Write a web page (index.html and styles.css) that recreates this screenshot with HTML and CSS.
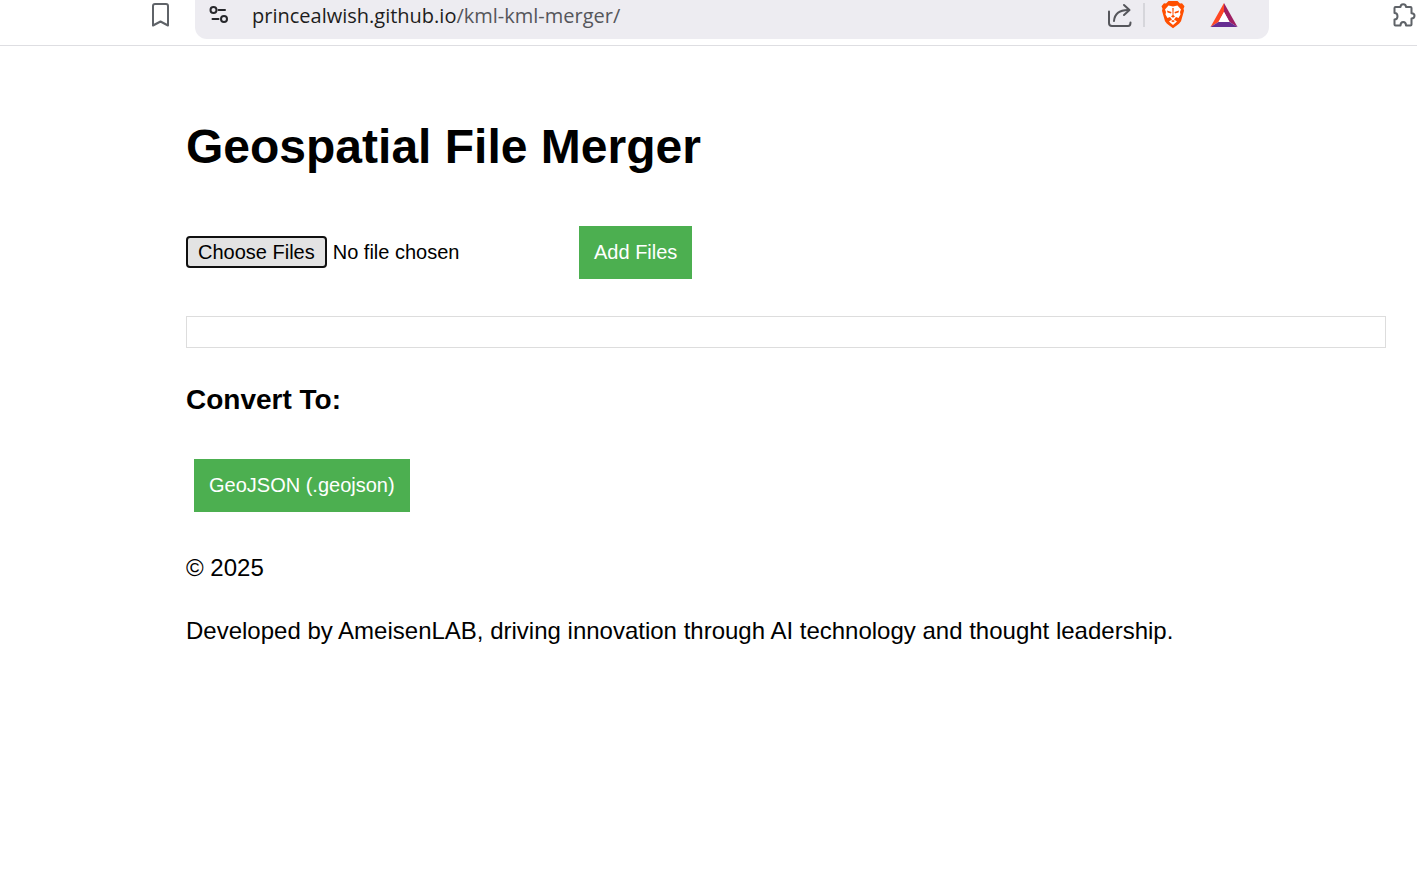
FILE: index.html
```html
<!DOCTYPE html>
<html lang="en">
<head>
<meta charset="utf-8">
<title>Geospatial File Merger</title>
<link rel="stylesheet" href="styles.css">
</head>
<body>
<header class="toolbar">
  <button class="icon-button" type="button" aria-label="Bookmark this page">
    <svg width="17" height="24" viewBox="0 0 17 24" fill="none" stroke="#5f6368" stroke-width="2" stroke-linejoin="round"><path d="M3 1h11Q16 1 16 3V22.500L8.500 18.500 1 22.500V3Q1 1 3 1Z"/></svg>
  </button>
  <div class="address">
    <button class="icon-button" type="button" aria-label="Site information">
      <svg width="20" height="18" viewBox="0 0 20 18" fill="none" stroke="#27282c" stroke-width="2" stroke-linecap="round"><circle cx="4.500" cy="4" r="3"/><path d="M9.500 4H16M3.500 13H9.500"/><circle cx="15" cy="13" r="3"/></svg>
    </button>
    <div class="url"><span class="host">princealwish.github.io</span>/kml-kml-merger/</div>
    <button class="icon-button" type="button" aria-label="Share">
      <svg width="24" height="24" viewBox="0 0 24 24" fill="none" stroke="#55565b" stroke-width="2" stroke-linecap="round" stroke-linejoin="round"><path d="M1 8.500V20Q1 23 4 23H20Q22.500 23 22.500 19.500"/><path d="M6 18Q7 7 20 7"/><path d="M16 2L21.500 7L16 12"/></svg>
    </button>
    <span class="divider"></span>
    <button class="icon-button" type="button" aria-label="Brave Shields">
      <svg width="24" height="28" viewBox="0 0 24 28"><path fill="#ff4f00" d="M7.500 0h9L19 2.500l2-.3 2.500 3-1 2.500.5 2-3 10.500-2 2.500-6 4.500-6-4.500L4 20.200 1 9.700l.5-2L.5 5.200 3 2.200l2 .3Z"/><path fill="#fff" d="M7.500 4.500l4.500 1 4.500-1L20 8.500 19 11l.5 2.500-2 3.500-2.500-1-2 2.500 3 2-4 3.500-4-3.500 3-2L9 16l-2.500 1-2-3.500L5 11 4 8.500Z"/><path fill="#ff4f00" d="M6 9.500l4.500 1.500-.5 1.500-3.500-1ZM18 9.500L13.500 11l.5 1.500 3.500-1ZM11.300 7h1.400l-.3 7 1.600 1.500-2 1.300-2-1.300 1.600-1.500ZM10 20l2-1 2 1-2 1.200Z"/></svg>
    </button>
    <button class="icon-button rewards" type="button" aria-label="Brave Rewards">
      <svg width="28" height="24" viewBox="0 0 28 24"><path fill="#ff4724" d="M14 0v9L8.500 19 .5 24Z"/><path fill="#9e1f63" d="M14 0l13.500 24-8-5L14 9Z"/><path fill="#662d91" d="M.5 24l8-5h11l8 5Z"/><path fill="#fff" d="M14 9l5.500 10h-11Z"/></svg>
    </button>
  </div>
  <button class="icon-button" type="button" aria-label="Extensions">
    <svg width="24" height="24" viewBox="0 0 24 24" fill="none" stroke="#5f6368" stroke-width="2" stroke-linejoin="round"><path d="M2.500 4H7.500C7.500 .2 13 .2 13 4H17.500Q18.500 4 18.500 5V10.200C22.500 10.200 22.500 15.500 18.500 15.500V21.500Q18.500 22.500 17.500 22.500H13C13 17.800 7.500 17.800 7.500 22.500H2.500Q1.500 22.500 1.500 21.500V16.500C5.500 16.500 5.500 10 1.500 10V5Q1.500 4 2.500 4Z"/></svg>
  </button>
</header>
<main class="page">
  <h1 class="title">Geospatial File Merger</h1>
  <div class="upload">
    <input class="file-input" type="file" multiple aria-label="Choose files to merge">
    <button class="button" type="button">Add Files</button>
  </div>
  <div class="file-list"></div>
  <h2 class="subtitle">Convert To:</h2>
  <div class="formats">
    <button class="button" type="button">GeoJSON (.geojson)</button>
  </div>
  <footer class="footer">
    <p>© 2025</p>
    <p>Developed by AmeisenLAB, driving innovation through AI technology and thought leadership.</p>
  </footer>
</main>
</body>
</html>
```
FILE: styles.css
```css
* { box-sizing: border-box; }
body {
  margin: 0;
  background: #fff;
  color: #000;
  font: 24px/28px "Liberation Sans", Arial, sans-serif;
}
.toolbar {
  display: flex;
  align-items: flex-start;
  height: 46px;
  padding-left: 152px;
  border-bottom: 1px solid #dedee2;
  overflow: hidden;
}
.icon-button {
  display: flex;
  flex: none;
  align-items: center;
  height: 30px;
  padding: 0;
  border: 0;
  background: none;
}
.icon-button svg { display: block; }
.address {
  display: flex;
  flex: 1;
  height: 39px;
  margin: 0 124px 0 26px;
  padding: 0 31px 0 14px;
  border-radius: 0 0 12px 12px;
  background: #edecf1;
}
.url {
  flex: 1;
  margin-left: 23px;
  color: #55565b;
  font: 20px/32px "Open Sans", "Noto Sans", sans-serif;
  white-space: nowrap;
}
.host { color: #1d1d20; }
.divider {
  width: 2px;
  height: 24px;
  margin: 3px 16px 0 11px;
  background: #d6d6db;
}
.rewards { margin-left: 25px; }
.page { padding: 73px 31px 32px 186px; }
.title {
  margin: 0;
  font-size: 48px;
  line-height: 56px;
}
.upload {
  display: flex;
  align-items: flex-start;
  margin-top: 51px;
}
.file-input {
  width: 393px;
  margin-top: 10px;
  font: 20px/24px "Liberation Sans", Arial, sans-serif;
}
.file-input::file-selector-button {
  height: 32px;
  margin: 0 6px 0 0;
  padding: 0 10px;
  border: 2px solid #101010;
  border-radius: 4px;
  background: #e3e3e3;
  color: #000;
  font: inherit;
}
.button {
  height: 53px;
  padding: 0 15px 2px;
  border: 0;
  background: #4caf50;
  color: #fff;
  font: 20px/24px "Liberation Sans", Arial, sans-serif;
}
.file-list {
  height: 32px;
  margin-top: 37px;
  border: 1px solid #ddd;
}
.subtitle {
  margin: 36px 0 0;
  font-size: 28px;
  line-height: 32px;
}
.formats { display: flex; padding: 43px 8px 0; }
.footer { margin-top: 42px; }
.footer p { margin: 0 0 35px; }
```
